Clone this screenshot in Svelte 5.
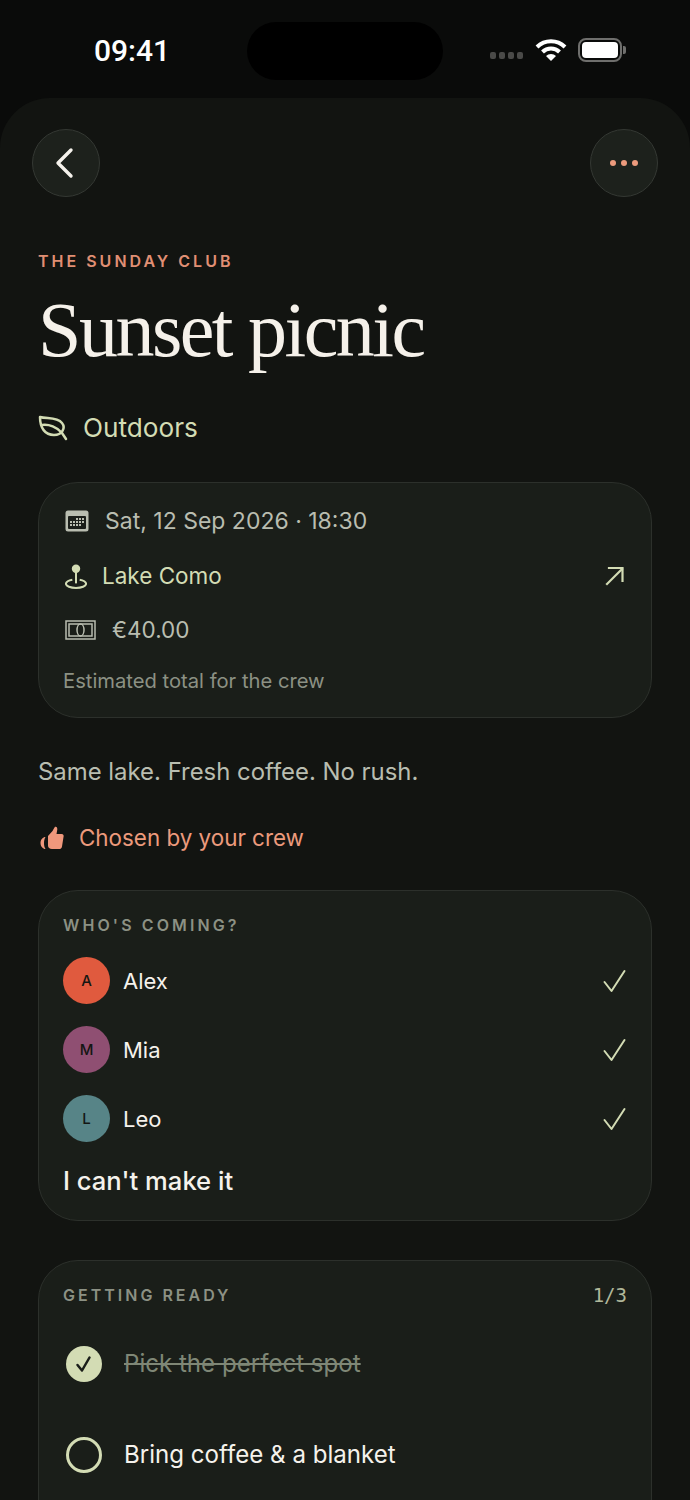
<script>
  const crew = [
    { name: 'Alex', initial: 'A', color: '#e05a3e' },
    { name: 'Mia', initial: 'M', color: '#8f4f72' },
    { name: 'Leo', initial: 'L', color: '#578487' }
  ];
</script>

<div class="screen">
  <div class="status">
    <span class="time">09:41</span>
    <div class="island"></div>
    <div class="status-icons">
      <div class="signal"><i></i><i></i><i></i><i></i></div>
      <svg class="wifi" width="32" height="24" viewBox="0 0 32 24">
        <path d="M2 9 A20 20 0 0 1 30 9" fill="none" stroke="#fff" stroke-width="4"/>
        <path d="M7.500 14 A12 12 0 0 1 24.500 14" fill="none" stroke="#fff" stroke-width="4"/>
        <path d="M11 18 A7 7 0 0 1 21 18 L16 23 Z" fill="#fff"/>
      </svg>
      <div class="battery"><div class="battery-fill"></div></div>
      <div class="battery-cap"></div>
    </div>
  </div>

  <main class="sheet">
    <div class="nav">
      <button class="round" aria-label="Back">
        <svg width="24" height="34" viewBox="0 0 24 34"><path d="M19 4 L6 17 L19 30" fill="none" stroke="#f5f2ec" stroke-width="3.400" stroke-linecap="round" stroke-linejoin="round"/></svg>
      </button>
      <button class="round" aria-label="More">
        <span class="dot"></span><span class="dot"></span><span class="dot"></span>
      </button>
    </div>

    <div class="eyebrow">THE SUNDAY CLUB</div>
    <h1>Sunset picnic</h1>

    <div class="category">
      <svg width="30" height="26" viewBox="0 0 30 26" fill="none" stroke="#d3dcb4" stroke-width="2.500" stroke-linecap="round" stroke-linejoin="round">
        <path d="M2 2 C9 4 19 2 24 8 C28 13 24 20 16 20 C7 20 2 13 2 2 Z"/>
        <path d="M4 10 C11 9 19 12 24 18 L28 24"/>
      </svg>
      <span>Outdoors</span>
    </div>

    <section class="card details">
      <div class="row date">
        <svg width="24" height="22" viewBox="0 0 24 22">
          <rect x="0.500" y="0.500" width="23" height="21" rx="2.500" fill="#b9bdb0"/>
          <rect x="3" y="6" width="18" height="13" rx="1" fill="#1a1e19"/>
          <g fill="#b9bdb0">
            <rect x="11" y="8" width="2" height="2"/><rect x="14" y="8" width="2" height="2"/><rect x="17" y="8" width="2" height="2"/>
            <rect x="5" y="11" width="2" height="2"/><rect x="8" y="11" width="2" height="2"/><rect x="11" y="11" width="2" height="2"/><rect x="14" y="11" width="2" height="2"/><rect x="17" y="11" width="2" height="2"/>
            <rect x="5" y="14" width="2" height="2"/><rect x="8" y="14" width="2" height="2"/><rect x="11" y="14" width="2" height="2"/><rect x="14" y="14" width="2" height="2"/>
          </g>
        </svg>
        <span>Sat, 12 Sep 2026 · 18:30</span>
      </div>
      <div class="row place">
        <svg class="pin" width="22" height="25" viewBox="0 0 24 27" fill="none" stroke="#d3dcb4" stroke-width="2.200">
          <circle cx="12" cy="5" r="3.500" fill="#d3dcb4"/>
          <path d="M12 8 V21"/>
          <path d="M8 17 C3 18 1 19.500 1 21.500 C1 24 6 26 12 26 C18 26 23 24 23 21.500 C23 19.500 21 18 16 17"/>
        </svg>
        <span>Lake Como</span>
        <svg class="arrow" width="22" height="20" viewBox="0 0 22 20" fill="none" stroke="#d3dcb4" stroke-width="2.200" stroke-linecap="square">
          <path d="M3 18 L18 3"/><path d="M5 2 H18.500 V15"/>
        </svg>
      </div>
      <div class="row price">
        <svg width="31" height="20" viewBox="0 0 31 20" fill="none" stroke="#b9bdb0" stroke-width="1.500">
          <rect x="1" y="1" width="29" height="18"/>
          <rect x="4" y="4" width="23" height="12"/>
          <ellipse cx="15.500" cy="10" rx="3.500" ry="6"/>
        </svg>
        <span>€40.00</span>
      </div>
      <div class="note">Estimated total for the crew</div>
    </section>

    <p class="blurb">Same lake. Fresh coffee. No rush.</p>

    <div class="chosen">
      <svg width="24" height="24" viewBox="0 0 24 24" fill="#f0987c">
        <path d="M8 10 L12.500 5 C13.500 3.500 14 2 15 0.800 C16.500 0.300 17.500 1.500 17.300 3.500 L16.500 8 H21.500 C23.500 8 24 9.500 23.500 11 L22 20.500 C21.700 22.500 20.500 23 19 23 H12 C9.500 23 8 21.500 8 19.500 Z"/>
        <path d="M5.500 11 C3 11 0.500 13.500 0.500 17 C0.500 20.500 3 23 5.500 23 C4.500 21.500 4 19.500 4 17 C4 14.500 4.500 12.500 5.500 11 Z"/>
      </svg>
      <span>Chosen by your crew</span>
    </div>

    <section class="card coming">
      <div class="label">WHO'S COMING?</div>
      <div class="people">
        {#each crew as p}
          <div class="person">
            <div class="avatar" style="background: {p.color}">{p.initial}</div>
            <span class="name">{p.name}</span>
            <svg width="24" height="24" viewBox="0 0 24 24" fill="none" stroke="#d3dcb4" stroke-width="2" stroke-linecap="round" stroke-linejoin="round">
              <path d="M1.500 13 L8.500 22 L21.500 2"/>
            </svg>
          </div>
        {/each}
      </div>
      <div class="decline">I can't make it</div>
    </section>

    <section class="card ready">
      <div class="ready-head">
        <div class="label">GETTING READY</div>
        <div class="count">1/3</div>
      </div>
      <div class="task done">
        <div class="tick">
          <svg width="20" height="20" viewBox="0 0 20 20" fill="none" stroke="#1a1e19" stroke-width="2.500" stroke-linecap="round" stroke-linejoin="round"><path d="M3.500 11 L8 16.500 L15.500 3.500"/></svg>
        </div>
        <span>Pick the perfect spot</span>
      </div>
      <div class="task">
        <div class="ring"></div>
        <span>Bring coffee &amp; a blanket</span>
      </div>
    </section>
  </main>
</div>

<style>
  :global(body) {
    background: #0a0b0a;
  }
  .screen {
    height: 1500px;
    overflow: hidden;
    font-family: Inter, "Liberation Sans", sans-serif;
    background: #0a0b0a;
    color: #f5f2ec;
  }
  .status {
    position: relative;
    height: 98px;
  }
  .time {
    position: absolute;
    left: 94px;
    top: 33px;
    font-family: Roboto, sans-serif;
    font-size: 30px;
    line-height: 36px;
    font-weight: 500;
    color: #fff;
  }
  .island {
    position: absolute;
    left: 247px;
    top: 22px;
    width: 196px;
    height: 58px;
    border-radius: 29px;
    background: #000;
  }
  .status-icons {
    position: absolute;
    left: 490px;
    top: 38px;
    display: flex;
    align-items: center;
  }
  .signal {
    display: flex;
    gap: 3px;
    margin-top: 10px;
  }
  .signal i {
    width: 6px;
    height: 7px;
    border-radius: 2px;
    background: #4a4a48;
  }
  .wifi {
    margin-left: 12px;
  }
  .battery {
    margin-left: 11px;
    width: 44px;
    height: 24px;
    box-sizing: border-box;
    border: 2px solid #6f6f6d;
    border-radius: 8px;
    padding: 2px;
  }
  .battery-fill {
    height: 100%;
    border-radius: 4px;
    background: #fff;
  }
  .battery-cap {
    width: 3px;
    height: 8px;
    margin-left: 1px;
    border-radius: 0 2px 2px 0;
    background: #6f6f6d;
  }
  .sheet {
    border-radius: 50px 50px 0 0;
    background: #121411;
    padding: 31px 38px 0;
    height: 1402px;
    box-sizing: border-box;
  }
  .nav {
    display: flex;
    justify-content: space-between;
    margin: 0 -6px;
  }
  .round {
    width: 68px;
    height: 68px;
    box-sizing: border-box;
    border-radius: 50%;
    border: 1.500px solid #343833;
    background: #1d211c;
    display: flex;
    align-items: center;
    justify-content: center;
    gap: 5px;
    padding: 0;
  }
  .round:first-child svg {
    margin-right: 5px;
  }
  .dot {
    width: 6px;
    height: 6px;
    border-radius: 50%;
    background: #ec9a7c;
  }
  .eyebrow {
    margin-top: 54px;
    font-size: 16px;
    line-height: 20px;
    font-weight: 600;
    letter-spacing: 3px;
    color: #e08f74;
  }
  h1 {
    margin: 17px 0 0;
    font-family: "Liberation Serif", serif;
    font-size: 78px;
    line-height: 84px;
    font-weight: 400;
    letter-spacing: -2.500px;
    color: #f5f1ea;
  }
  .category {
    margin-top: 39px;
    display: flex;
    align-items: center;
    gap: 15px;
    font-size: 26.200px;
    line-height: 34px;
    color: #d3dcb4;
  }
  .card {
    box-sizing: border-box;
    background: #1a1e19;
    border: 1.500px solid #2c302b;
    border-radius: 40px;
    padding: 0 24px;
  }
  .details {
    margin-top: 37px;
    height: 236px;
    padding-top: 22px;
  }
  .row {
    display: flex;
    align-items: center;
    font-size: 22.500px;
    line-height: 32px;
  }
  .date {
    gap: 16px;
    margin-left: 2px;
    font-size: 23px;
    color: #b9bdb0;
  }
  .place {
    margin-top: 23px;
    gap: 15px;
    color: #d3dcb4;
  }
  .pin {
    margin-left: 2px;
  }
  .arrow {
    margin-left: auto;
    margin-right: 1px;
  }
  .price {
    margin-top: 22px;
    margin-left: 2px;
    gap: 16px;
    color: #b9bdb0;
  }
  .note {
    margin-top: 21px;
    font-size: 20.200px;
    line-height: 28px;
    color: #8c9184;
  }
  .blurb {
    margin: 37px 0 0;
    font-size: 23.900px;
    line-height: 34px;
    color: #b9bdb0;
  }
  .chosen {
    margin-top: 32px;
    margin-left: 2px;
    display: flex;
    align-items: center;
    gap: 15px;
    font-size: 22.400px;
    line-height: 34px;
    color: #ec9a7c;
  }
  .coming {
    margin-top: 35px;
    height: 331px;
    padding-top: 23px;
  }
  .label {
    font-size: 16px;
    line-height: 22px;
    font-weight: 600;
    letter-spacing: 3.100px;
    color: #8c9184;
  }
  .people {
    margin-top: 21px;
    display: flex;
    flex-direction: column;
    gap: 22px;
  }
  .person {
    display: flex;
    align-items: center;
    gap: 13px;
  }
  .avatar {
    width: 47px;
    height: 47px;
    border-radius: 50%;
    display: flex;
    align-items: center;
    justify-content: center;
    font-size: 15px;
    font-weight: 500;
    color: #141613;
  }
  .name {
    flex: 1;
    font-size: 22px;
    line-height: 32px;
    color: #f5f2ec;
  }
  .decline {
    margin-top: 22px;
    font-size: 25.600px;
    line-height: 34px;
    font-weight: 500;
    color: #f5f2ec;
  }
  .ready {
    margin-top: 39px;
    height: 400px;
    padding-top: 23px;
  }
  .ready .label {
    letter-spacing: 3px;
  }
  .ready-head {
    display: flex;
    justify-content: space-between;
    align-items: center;
  }
  .count {
    font-family: "DejaVu Sans Mono", monospace;
    font-size: 19px;
    line-height: 22px;
    color: #b0b79a;
  }
  .task {
    display: flex;
    align-items: center;
    gap: 22px;
    margin-left: 3px;
    margin-top: 55px;
    font-size: 24.100px;
    line-height: 36px;
    color: #f5f2ec;
  }
  .task.done {
    margin-top: 40px;
    color: #7f8776;
    text-decoration: line-through;
  }
  .tick,
  .ring {
    width: 36px;
    height: 36px;
    box-sizing: border-box;
    border-radius: 50%;
    flex: none;
    display: flex;
    align-items: center;
    justify-content: center;
  }
  .tick {
    background: #d3dcb4;
  }
  .ring {
    border: 3px solid #d3dcb4;
  }
</style>
